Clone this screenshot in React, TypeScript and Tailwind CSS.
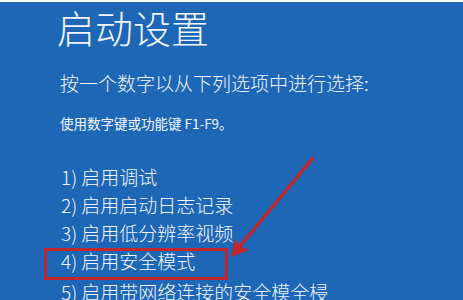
export default function App() {
  const options = [
    "1) 启用调试",
    "2) 启用启动日志记录",
    "3) 启用低分辨率视频",
    "4) 启用安全模式",
  ];

  return (
    <div
      className="relative h-[300px] w-[463px] overflow-hidden border-t-2 border-white bg-[#1d67b6] text-[#f2f6fb]"
      style={{ fontFamily: '"Noto Sans CJK SC", "Noto Sans", sans-serif' }}
    >
      <div className="flex flex-col pl-[57px] pt-[1px]">
        <h1 className="text-[38px] font-light leading-[48px]">启动设置</h1>
        <p className="mt-[18px] pl-[3px] text-[19px] font-light leading-[28px]">
          按一个数字以从下列选项中进行选择:
        </p>
        <p className="mt-[16px] pl-[3px] text-[13.5px] leading-[20px]">
          使用数字键或功能键 F1-F9。
        </p>
        <ul className="mt-[30px] flex flex-col pl-[4px]">
          {options.map((o) => (
            <li key={o} className="whitespace-nowrap text-[19px] font-light leading-[28px]">
              {o}
            </li>
          ))}
          <li className="mt-[3px] whitespace-nowrap text-[19px] font-light leading-[28px]">
            5) 启用带网络连接的安全模全梫
          </li>
        </ul>
      </div>

      {/* annotation overlay */}
      <div className="absolute left-[44px] top-[246px] h-[32px] w-[184px] border-[3px] border-[#c1272d]" />
      <svg className="absolute left-0 top-0" width="463" height="300" viewBox="0 0 463 300">
        <line x1="313" y1="156" x2="236" y2="249" stroke="#c1272d" strokeWidth="3.5" strokeLinecap="round" />
        <path d="M231 255 L235 237 L240 244 L249 248 Z" fill="#c1272d" />
      </svg>
    </div>
  );
}
